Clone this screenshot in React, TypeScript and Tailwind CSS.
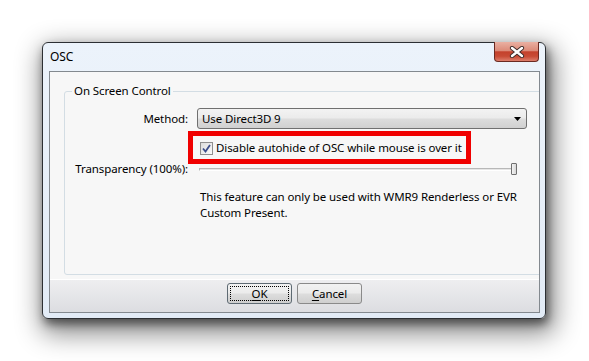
import React from "react";

const font = { fontFamily: '"Segoe UI", "Noto Sans", "Liberation Sans", sans-serif' };

function CloseGlyph() {
  return (
    <svg width="16" height="12" viewBox="0 0 16 12">
      <path d="M3 2 L13 10 M13 2 L3 10" stroke="#3b2a28" strokeWidth="4.2" strokeLinecap="round" />
      <path d="M3 2 L13 10 M13 2 L3 10" stroke="#ffffff" strokeWidth="2.4" strokeLinecap="round" />
    </svg>
  );
}

function Button({ label, hot, focused }: { label: string; hot: string; focused?: boolean }) {
  const rest = label.slice(1);
  return (
    <button
      className={
        "relative flex h-[21px] w-[65px] items-center justify-center rounded-[3px] border bg-[linear-gradient(#f2f2f2_0%,#ebebeb_48%,#dddddd_52%,#cfcfcf_100%)] text-black " +
        (focused ? "border-[#5e6a73]" : "border-[#8a8a8a]")
      }
    >
      {focused && (
        <span className="pointer-events-none absolute inset-[2px] border border-dotted border-black" />
      )}
      <span>
        <span className="underline underline-offset-2">{hot}</span>
        {rest}
      </span>
    </button>
  );
}

export default function App() {
  return (
    <div
      className="h-[361px] w-[589px] overflow-hidden bg-white pl-[42px] pt-[42px] text-[11.5px] tracking-[-0.1px] text-black"
      style={font}
    >
      <div className="flex h-[277px] w-[504px] flex-col rounded-[6px] border border-[#2c2f33] bg-[linear-gradient(#ecf3fb,#e2ebf6)] pb-[5px] pl-[6px] pr-[5px] shadow-[2px_5px_10px_rgba(0,0,0,0.5),4px_10px_26px_5px_rgba(0,0,0,0.45)]">
        {/* title bar */}
        <div className="flex h-[28px] items-start justify-between">
          <span className="mt-[6px] pl-[1px] text-[12px] leading-[16px]">OSC</span>
          <div className="-mt-px mr-px flex h-[20px] w-[45px] items-center justify-center rounded-b-[4px] border border-t-0 border-[#6b2a22] bg-[linear-gradient(#eab0a2_0%,#dc8b79_45%,#c4412c_52%,#c84b35_75%,#dd7e6c_100%)]">
            <CloseGlyph />
          </div>
        </div>

        {/* client area */}
        <div className="flex flex-1 flex-col overflow-hidden border border-[#83898f] bg-[#f7f7f7]">
          <div className="flex-1 pb-[4px] pl-[14px] pt-[19px]">
            <div className="relative -mr-[12px] h-[184px] rounded-[3px] border border-[#d3dde4]">
              <span className="absolute -top-[9px] left-[7px] bg-[#f7f7f7] px-[2px] leading-[16px]">
                On Screen Control
              </span>

              <div className="pt-[16px]">
                <div className="flex items-center gap-[9px]">
                  <span className="w-[123px] text-right leading-[16px]">Method:</span>
                  <div className="flex h-[21px] w-[330px] items-center justify-between rounded-[3px] border border-[#707070] bg-[linear-gradient(#f3f3f3_0%,#ebebeb_48%,#dddddd_52%,#d0d0d0_100%)] pl-[4px] pr-[5px]">
                    <span className="leading-[16px]">Use Direct3D 9</span>
                    <svg width="7" height="4" viewBox="0 0 7 4">
                      <path d="M0 0 H7 L3.5 4 Z" fill="#000" />
                    </svg>
                  </div>
                </div>

                <div className="relative mt-[11px] flex h-[16px] items-center gap-[9px]">
                  <span className="w-[123px]" />
                  <span className="ml-[3px] flex h-[13px] w-[13px] items-center justify-center border border-[#8f8f8f] bg-[linear-gradient(135deg,#dcdcdc,#fbfbfb)]">
                    <svg width="9" height="9" viewBox="0 0 9 9">
                      <path d="M1 4.5 L3.5 7.5 L8 1" fill="none" stroke="#3d4f8c" strokeWidth="1.8" />
                    </svg>
                  </span>
                  <span className="-ml-[6px] leading-[16px]">Disable autohide of OSC while mouse is over it</span>
                  <span className="pointer-events-none absolute -top-[9px] left-[123px] h-[33px] w-[283px] border-[5px] border-[#f00000]" />
                </div>

                <div className="mt-[5px] flex h-[16px] items-center gap-[9px]">
                  <span className="w-[123px] text-right leading-[16px]">Transparency (100%):</span>
                  <div className="relative flex h-[16px] w-[321px] items-center">
                    <div className="ml-[2px] h-[3px] w-[315px] border border-[#b8b8b8] border-b-white bg-[#e6e6e6]" />
                    <span className="absolute right-[1px] top-[2px] h-[12px] w-[6px] rounded-[1px] border border-[#707070] bg-[linear-gradient(90deg,#f4f4f4,#d8d8d8)]" />
                  </div>
                </div>

                <div className="mt-[12px] flex gap-[9px]">
                  <span className="w-[123px]" />
                  <p className="ml-[3px] w-[330px] leading-[16px]">
                    This feature can only be used with WMR9 Renderless or EVR Custom Present.
                  </p>
                </div>
              </div>
            </div>
          </div>

          <div className="flex h-[33px] justify-center gap-[5px] border-t border-t-white bg-[linear-gradient(#eeeef0,#dcdde1)] pt-[3px]">
            <Button label="OK" hot="O" focused />
            <Button label="Cancel" hot="C" />
          </div>
        </div>
      </div>
    </div>
  );
}
